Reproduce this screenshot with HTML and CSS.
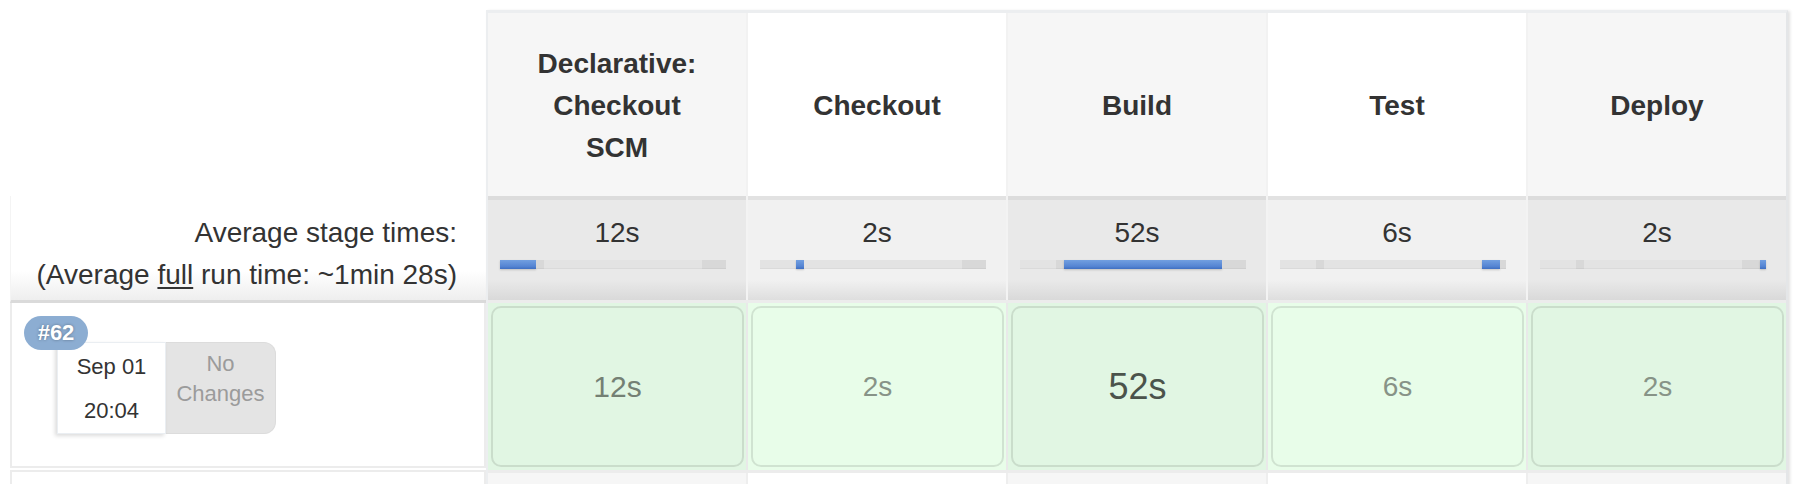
FILE: index.html
```html
<!DOCTYPE html>
<html>
<head>
<meta charset="utf-8">
<title>Stage View</title>
<link rel="stylesheet" href="styles.css">
</head>
<body>
<div class="stage-view">
  <div class="labels">
    <div class="lbl-head"></div>
    <div class="lbl-avg">
      <div>Average stage times:</div>
      <div>(Average <u>full</u> run time: ~1min 28s)</div>
    </div>
    <div class="build">
      <span class="badge">#62</span>
      <div class="build-info">
        <div class="date"><div>Sep 01</div><div>20:04</div></div>
        <div class="changes"><div>No</div><div>Changes</div></div>
      </div>
    </div>
    <div class="build build-next"></div>
  </div>

  <div class="table">
    <div class="row head">
      <div class="cell odd"><span>Declarative: Checkout SCM</span></div>
      <div class="cell even"><span>Checkout</span></div>
      <div class="cell odd"><span>Build</span></div>
      <div class="cell even"><span>Test</span></div>
      <div class="cell odd"><span>Deploy</span></div>
    </div>

    <div class="row avg">
      <div class="cell odd">
        <div class="avg-time">12s</div>
        <div class="bar"><span class="seg s0 cur"></span><span class="seg s1"></span><span class="seg s2"></span><span class="seg s3"></span><span class="seg s4"></span></div>
      </div>
      <div class="cell even">
        <div class="avg-time">2s</div>
        <div class="bar"><span class="seg s0"></span><span class="seg s1 cur"></span><span class="seg s2"></span><span class="seg s3"></span><span class="seg s4"></span></div>
      </div>
      <div class="cell odd">
        <div class="avg-time">52s</div>
        <div class="bar"><span class="seg s0"></span><span class="seg s1"></span><span class="seg s2 cur"></span><span class="seg s3"></span><span class="seg s4"></span></div>
      </div>
      <div class="cell even">
        <div class="avg-time">6s</div>
        <div class="bar"><span class="seg s0"></span><span class="seg s1"></span><span class="seg s2"></span><span class="seg s3 cur"></span><span class="seg s4"></span></div>
      </div>
      <div class="cell odd">
        <div class="avg-time">2s</div>
        <div class="bar"><span class="seg s0"></span><span class="seg s1"></span><span class="seg s2"></span><span class="seg s3"></span><span class="seg s4 cur"></span></div>
      </div>
    </div>

    <div class="row data">
      <div class="cell odd"><div class="box"><span class="dur dur-md">12s</span></div></div>
      <div class="cell even"><div class="box"><span class="dur dur-sm">2s</span></div></div>
      <div class="cell odd"><div class="box"><span class="dur dur-lg">52s</span></div></div>
      <div class="cell even"><div class="box"><span class="dur dur-sm">6s</span></div></div>
      <div class="cell odd"><div class="box"><span class="dur dur-sm">2s</span></div></div>
    </div>

    <div class="row row-next">
      <div class="cell odd"></div>
      <div class="cell even"></div>
      <div class="cell odd"></div>
      <div class="cell even"></div>
      <div class="cell odd"></div>
    </div>
  </div>
</div>
</body>
</html>
```

FILE: styles.css
```css
html, body {
  margin: 0;
  padding: 0;
  background: #ffffff;
  overflow: hidden;
}

body {
  font-family: "Liberation Sans", Arial, Helvetica, sans-serif;
  color: #333333;
}

.stage-view {
  display: flex;
  align-items: flex-start;
  padding: 10px 0 0 10px;
}

/* ---------- left label column ---------- */
.labels {
  width: 476px;
  flex: none;
}

.lbl-head {
  height: 186px;
}

.lbl-avg {
  box-sizing: border-box;
  height: 107px;
  padding: 16px 29px 0 0;
  text-align: right;
  font-size: 28px;
  line-height: 42px;
  color: #333;
  background: linear-gradient(to bottom, #ffffff 72%, #eeeeee 100%);
  border-left: 1px solid #f4f4f4;
  border-bottom: 3px solid #dadada;
}

.lbl-avg u {
  text-decoration-thickness: 2px;
  text-underline-offset: 3px;
}

.build {
  position: relative;
  box-sizing: border-box;
  height: 165px;
  padding: 39px 0 0 45px;
  border-left: 2px solid #ececec;
  border-right: 2px solid #ececec;
  border-bottom: 2px solid #ececec;
  margin-bottom: 2px;
}

.build-next {
  height: 60px;
  border-top: 2px solid #ececec;
  border-bottom: none;
  background: #ffffff;
}

.badge {
  position: absolute;
  left: 12px;
  top: 13px;
  z-index: 2;
  width: 64px;
  height: 34px;
  border-radius: 17px;
  background: #8cadd2;
  color: #ffffff;
  font-weight: bold;
  font-size: 22px;
  line-height: 34px;
  text-align: center;
  text-shadow: 0 0 3px rgba(0, 0, 0, 0.35);
}

.build-info {
  display: flex;
}

.date {
  box-sizing: border-box;
  width: 109px;
  height: 92px;
  padding-top: 2px;
  background: #ffffff;
  border: 1px solid #eaeef2;
  box-shadow: -2px 2px 4px rgba(0, 0, 0, 0.14);
  text-align: center;
  font-size: 22px;
  line-height: 44px;
  color: #333;
  position: relative;
  z-index: 1;
}

.changes {
  box-sizing: border-box;
  width: 110px;
  height: 92px;
  padding-top: 6px;
  background: #e4e4e4;
  border: 1px solid #dcdcdc;
  border-left: none;
  border-radius: 0 12px 12px 0;
  text-align: center;
  font-size: 22px;
  line-height: 30px;
  color: #9b9b9b;
}

/* ---------- stage table ---------- */
.table {
  flex: none;
  border-top: 3px solid #eceef0;
  border-left: 2px solid #eceef0;
  border-right: 2px solid #e4e6e8;
  box-shadow: 2px 1px 3px rgba(0, 0, 0, 0.12);
  background: #ececec;
}

.row {
  display: grid;
  grid-template-columns: repeat(5, 258px);
  column-gap: 2px;
}

.head {
  background: #f2f2f2;
}

.head .cell {
  box-sizing: border-box;
  height: 183px;
  padding: 3px 34px 0;
  display: flex;
  align-items: center;
  justify-content: center;
  text-align: center;
  font-weight: bold;
  font-size: 28px;
  line-height: 42px;
  color: #333;
}

.head .odd { background: #f6f6f6; }
.head .even { background: #ffffff; }

.avg {
  background: #f3f3f3;
}

.avg .cell {
  box-sizing: border-box;
  height: 104px;
  padding-top: 12px;
  text-align: center;
}

.avg .odd {
  border-top: 4px solid #dcdcdc;
  background: linear-gradient(to bottom, #e9e9e9 80%, #d9d9d9 100%);
}

.avg .even {
  border-top: 4px solid #e2e2e2;
  background: linear-gradient(to bottom, #f1f1f1 80%, #dedede 100%);
}

.avg-time {
  font-size: 28px;
  line-height: 42px;
  color: #333;
}

.bar {
  display: flex;
  width: 226px;
  height: 9px;
  margin: 6px 0 0 12px;
}

.seg {
  display: block;
  height: 100%;
  background: #e3e3e3;
  box-shadow: inset 0 -1px 0 rgba(0, 0, 0, 0.04);
}

.s0 { width: 36px; }
.s1 { width: 8px; background: #d8d8d8; }
.s2 { width: 158px; }
.s3 { width: 18px; background: #d8d8d8; }
.s4 { width: 6px; background: #d8d8d8; }

.seg.cur {
  background: linear-gradient(to bottom, #729fe0 0%, #5585d3 70%, #3f6fc2 100%);
  box-shadow: 0 1px 2px rgba(0, 0, 0, 0.18);
}

.data {
  margin-top: 3px;
  background: #e9e9e9;
}

.data .cell {
  box-sizing: border-box;
  height: 167px;
  padding: 3px 2px 3px 3px;
}

.data .odd { background: #e1f6e3; }
.data .even { background: #e8fde9; }

.box {
  box-sizing: border-box;
  height: 100%;
  border: 2px solid rgba(0, 0, 0, 0.1);
  border-radius: 10px;
  display: flex;
  align-items: center;
  justify-content: center;
}

.dur {
  line-height: 1;
}

.dur-md {
  font-size: 30px;
  color: #748074;
}

.dur-sm {
  font-size: 28px;
  color: #879387;
}

.dur-lg {
  font-size: 36px;
  color: #4b534b;
}

.row-next {
  margin-top: 3px;
  background: #eeeeee;
}

.row-next .cell {
  height: 200px;
}

.row-next .odd { background: #f6f6f6; }
.row-next .even { background: #ffffff; }
```
